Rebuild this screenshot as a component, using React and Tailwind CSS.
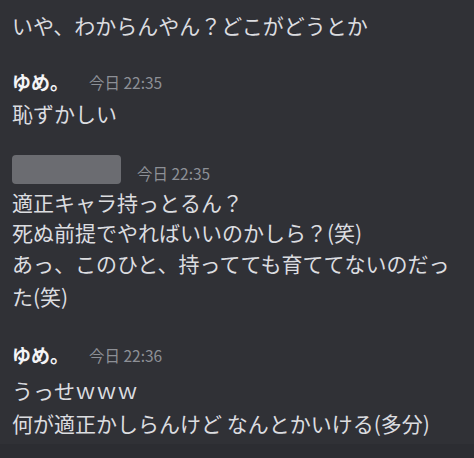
const font = { fontFamily: '"Noto Sans CJK JP", "Noto Sans", sans-serif' }

function Header({ name, time, blurred }) {
  return (
    <div className="flex h-[30px] items-center gap-5">
      {blurred ? (
        <div className="h-[29px] w-[109px] rounded-[4px] bg-[#6b6c71] blur-[0.6px]" />
      ) : (
        <span className="text-[19px] font-bold leading-[30px] text-[#f4f4f6]">{name}</span>
      )}
      <span className={`text-[15.5px] leading-[30px] text-[#8d9096] ${blurred ? 'mt-2 -ml-1' : ''}`}>{time}</span>
    </div>
  )
}

function Line({ children, className = '' }) {
  return <p className={`text-[21px] leading-[30px] text-[#dcdde0] ${className}`}>{children}</p>
}

export default function App() {
  return (
    <div className="h-[458px] w-[474px] overflow-hidden bg-[#303136]" style={font}>
      <div className="pl-3 pr-2 pt-[10px]">
        <Line>いや、わからんやん？どこがどうとか</Line>

        <div className="mt-[27px]">
          <Header name="ゆめ。" time="今日 22:35" />
          <Line className="mt-px">恥ずかしい</Line>
        </div>

        <div className="mt-[26px]">
          <Header blurred time="今日 22:35" />
          <Line className="mt-[3px]">適正キャラ持っとるん？</Line>
          <Line>死ぬ前提でやればいいのかしら？(笑)</Line>
          <Line className="leading-[33px]">
            あっ、このひと、持ってても育ててないのだった(笑)
          </Line>
        </div>

        <div className="mt-[27px]">
          <Header name="ゆめ。" time="今日 22:36" />
          <Line className="mt-[5px]">うっせｗｗｗ</Line>
          <Line className="mt-[3px]">何が適正かしらんけど なんとかいける(多分)</Line>
        </div>
      </div>
      <div className="mt-[6px] h-[20px] bg-[#2c2d32] px-3 pt-[8px]">
        <Line>ゆめ。 今日 22:36</Line>
      </div>
    </div>
  )
}
